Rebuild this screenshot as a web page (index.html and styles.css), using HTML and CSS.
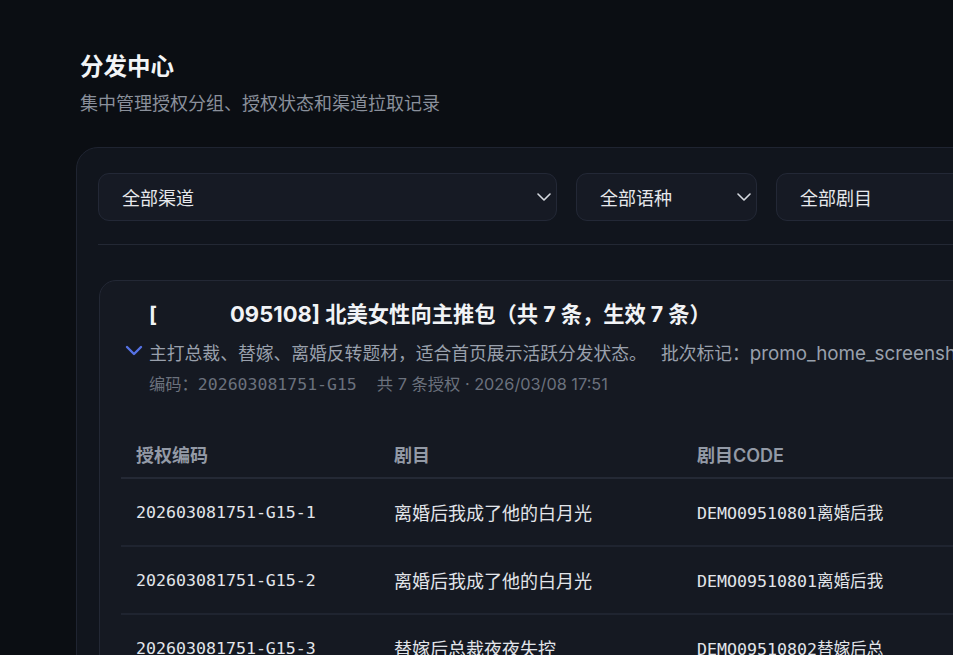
FILE: index.html
```html
<!DOCTYPE html>
<html lang="zh-CN">
<head>
<meta charset="utf-8">
<title>分发中心</title>
<link rel="stylesheet" href="styles.css">
</head>
<body>
<div class="page">
  <header class="page-head">
    <h1 class="page-title">分发中心</h1>
    <p class="page-sub">集中管理授权分组、授权状态和渠道拉取记录</p>
  </header>
  <section class="panel">
    <div class="filters">
      <div class="select select-wide"><span>全部渠道</span>
        <svg class="chev" width="14" height="8" viewBox="0 0 14 8"><path d="M1 1l6 6 6-6" fill="none" stroke="currentColor" stroke-width="1.6" stroke-linecap="round" stroke-linejoin="round"/></svg>
      </div>
      <div class="select select-mid"><span>全部语种</span>
        <svg class="chev" width="14" height="8" viewBox="0 0 14 8"><path d="M1 1l6 6 6-6" fill="none" stroke="currentColor" stroke-width="1.6" stroke-linecap="round" stroke-linejoin="round"/></svg>
      </div>
      <div class="select select-last"><span>全部剧目</span></div>
    </div>
    <div class="divider"></div>
    <article class="group">
      <div class="group-head">
        <svg class="toggle" width="18" height="11" viewBox="0 0 18 11"><path d="M2 2l7 7 7-7" fill="none" stroke="currentColor" stroke-width="2.4" stroke-linecap="round" stroke-linejoin="round"/></svg>
        <div class="group-info">
          <div class="group-title"><span class="bracket">[</span><span class="gap"></span><span class="num">095108]</span> 北美女性向主推包（共 7 条，生效 7 条）</div>
          <div class="group-desc">主打总裁、替嫁、离婚反转题材，适合首页展示活跃分发状态。<span class="batch">批次标记：<span class="latin">promo_home_screenshot</span></span></div>
          <div class="group-meta">编码：<span class="mono">202603081751-G15</span><span class="meta-sep"></span>共 7 条授权 · 2026/03/08 17:51</div>
        </div>
      </div>
      <table class="grid">
        <colgroup><col class="c1"><col class="c2"><col class="c3"></colgroup>
        <thead>
          <tr><th>授权编码</th><th>剧目</th><th>剧目CODE</th></tr>
        </thead>
        <tbody>
          <tr><td class="mono">202603081751-G15-1</td><td>离婚后我成了他的白月光</td><td class="mono">DEMO09510801离婚后我</td></tr>
          <tr><td class="mono">202603081751-G15-2</td><td>离婚后我成了他的白月光</td><td class="mono">DEMO09510801离婚后我</td></tr>
          <tr><td class="mono">202603081751-G15-3</td><td>替嫁后总裁夜夜失控</td><td class="mono">DEMO09510802替嫁后总</td></tr>
        </tbody>
      </table>
    </article>
  </section>
</div>
</body>
</html>
```

FILE: styles.css
```css
html, body {
  margin: 0;
  padding: 0;
  background: #0b0e13;
  overflow: hidden;
  height: 655px;
}
body {
  font-family: Inter, "Noto Sans CJK SC", sans-serif;
  color: #e4e7eb;
}
.page {
  padding: 50px 0 0 76px;
  width: 1400px;
}
.page-head {
  padding-left: 4px;
}
.page-title {
  margin: 0;
  font-size: 23.5px;
  line-height: 34px;
  font-weight: 700;
  color: #f2f4f6;
}
.page-sub {
  margin: 7px 0 0;
  font-size: 18px;
  line-height: 26px;
  color: #8a909b;
}
.panel {
  margin-top: 30px;
  width: 1200px;
  background: #11151d;
  border: 1px solid #1f2431;
  border-radius: 22px;
  padding: 25px 21px 0;
  height: 600px;
}
.filters {
  display: flex;
  gap: 19px;
}
.select {
  box-sizing: border-box;
  height: 48px;
  display: flex;
  align-items: center;
  justify-content: space-between;
  padding: 0 5px 0 23px;
  background: #161a24;
  border: 1px solid #232836;
  border-radius: 11px;
  font-size: 18px;
  color: #e6e8ec;
}
.select-wide { width: 459px; }
.select-mid { width: 181px; }
.select-last { width: 300px; }
.chev {
  color: #d5d9df;
}
.divider {
  height: 1px;
  background: #232834;
  margin-top: 23px;
}
.group {
  margin-top: 35px;
  margin-left: 1px;
  background: #151922;
  border: 1px solid #232835;
  border-radius: 17px;
  padding: 18px 0 0 21px;
  height: 500px;
}
.group-head {
  display: flex;
  align-items: center;
  gap: 6px;
  padding-left: 4px;
}
.toggle {
  color: #5572e4;
  margin-top: 5px;
}
.group-info {
  display: flex;
  flex-direction: column;
}
.group-title {
  font-size: 21.3px;
  line-height: 30px;
  font-weight: 700;
  color: #f1f3f6;
  white-space: nowrap;
}
.gap {
  display: inline-block;
  width: 73px;
}
.num {
  font-size: 22px;
}
.group-desc {
  margin-top: 12px;
  font-size: 17.8px;
  line-height: 26px;
  color: #99a0ac;
  white-space: nowrap;
}
.batch {
  margin-left: 14px;
}
.latin {
  font-size: 18.8px;
}
.group-meta {
  margin-top: 5px;
  font-size: 16.3px;
  line-height: 24px;
  color: #6b717d;
  white-space: nowrap;
}
.meta-sep {
  display: inline-block;
  width: 20px;
}
.mono {
  font-family: "DejaVu Sans Mono", "Noto Sans CJK SC", monospace;
}
.group-meta .mono {
  font-size: 16.5px;
}
.grid {
  margin-top: 34px;
  border-collapse: collapse;
  table-layout: fixed;
  width: 1000px;
}
.c1 { width: 258px; }
.c2 { width: 303px; }
.c3 { width: 439px; }
.grid th {
  text-align: left;
  font-size: 18px;
  font-weight: 600;
  color: #939aa6;
  padding: 0 15px;
  height: 46px;
  border-bottom: 2px solid #242935;
  vertical-align: middle;
}
.grid td {
  padding: 0 15px;
  height: 66px;
  border-bottom: 2px solid #1f2430;
  font-size: 18px;
  color: #e2e5ea;
  white-space: nowrap;
  vertical-align: middle;
}
.grid td.mono {
  font-size: 16.6px;
}
```
